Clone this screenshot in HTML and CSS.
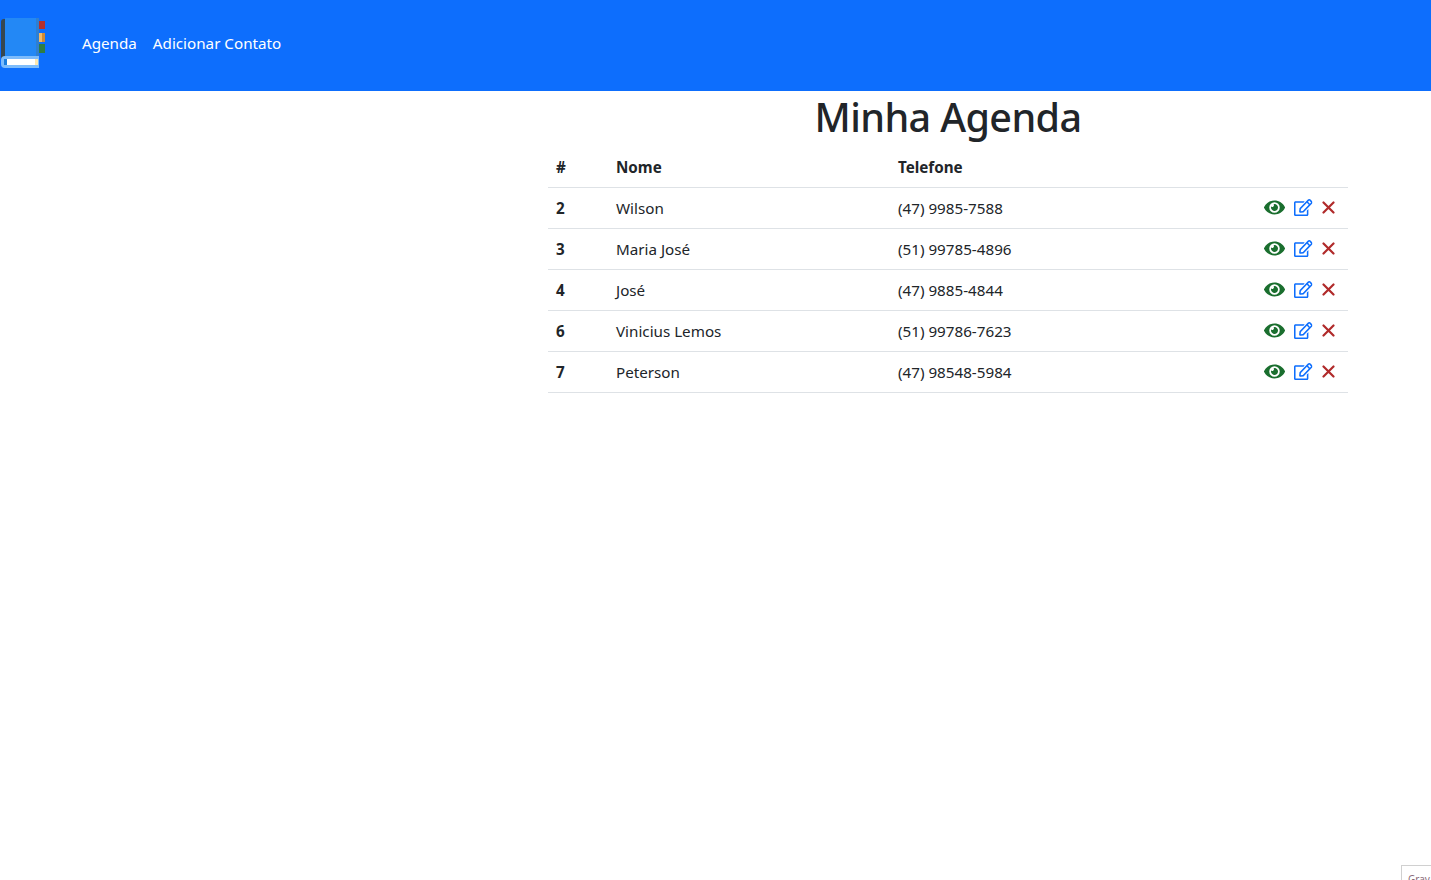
FILE: index.html
```html
<!DOCTYPE html>
<html lang="pt-BR">
<head>
<meta charset="utf-8">
<title>Minha Agenda</title>
<link rel="stylesheet" href="styles.css">
</head>
<body>
<svg class="defs" width="0" height="0" aria-hidden="true">
  <symbol id="eye" viewBox="0 0 576 512"><path fill="currentColor" d="M572.52 241.4C518.29 135.59 410.93 64 288 64S57.68 135.64 3.48 241.41a32.35 32.35 0 0 0 0 29.19C57.71 376.41 165.07 448 288 448s230.32-71.64 284.52-177.41a32.35 32.35 0 0 0 0-29.19zM288 400a144 144 0 1 1 144-144 143.93 143.93 0 0 1-144 144zm0-240a95.31 95.31 0 0 0-25.31 3.79 47.85 47.85 0 0 1-66.9 66.9A95.78 95.78 0 1 0 288 160z"/></symbol>
  <symbol id="edit" viewBox="0 0 576 512" preserveAspectRatio="none"><path fill="currentColor" d="M402.3 344.9l32-32c5-5 13.7-1.5 13.7 5.7V464c0 26.5-21.5 48-48 48H48c-26.5 0-48-21.5-48-48V112c0-26.5 21.5-48 48-48h273.5c7.1 0 10.7 8.6 5.7 13.7l-32 32c-1.5 1.5-3.5 2.3-5.7 2.3H48v352h352V350.5c0-2.1.8-4.1 2.3-5.6zm156.6-201.8L296.3 405.7l-90.4 10c-26.2 2.9-48.5-19.2-45.6-45.6l10-90.4L432.9 17.1c22.9-22.9 59.9-22.9 82.7 0l43.2 43.2c22.9 22.9 22.9 60 .1 82.8zM460.1 174L402 115.9 216.2 301.8l-7.3 65.3 65.3-7.3L460.1 174zm64.8-79.7l-43.2-43.2c-4.1-4.1-10.8-4.1-14.8 0L436 82l58.1 58.1 30.9-30.9c4-4.2 4-10.8-.1-14.9z"/></symbol>
  <symbol id="close" viewBox="0 0 14 14"><path stroke="currentColor" stroke-width="2.2" stroke-linecap="round" fill="none" d="M1.500 2.500l10 10M11.500 2.500l-10 10"/></symbol>
</svg>

<nav class="navbar">
  <svg class="logo" width="46" height="50" viewBox="0 0 46 50" aria-label="Agenda">
    <path d="M6 1H4a3 3 0 0 0-3 3V44H6z" fill="#37474f"/>
    <rect x="39" y="3" width="6" height="8" fill="#b3302e"/>
    <rect x="39" y="15" width="3" height="9" fill="#f2b968"/>
    <rect x="42" y="15" width="3" height="9" fill="#d08a35"/>
    <rect x="39" y="26" width="6" height="9" fill="#2e7d44"/>
    <rect x="5" y="0" width="31" height="38" fill="#2388f5"/>
    <rect x="36" y="0" width="3" height="38" fill="#2f7fd0"/>
    <path d="M5 38H39V50H5a4 4 0 0 1-4-4v-4a4 4 0 0 1 4-4z" fill="#7dbcfb"/>
    <rect x="4" y="41" width="3" height="6" fill="#1c7fe0"/>
    <rect x="7" y="41" width="28" height="6" fill="#ffffff"/>
    <rect x="35" y="41" width="3" height="6" fill="#fde7b0"/>
  </svg>
  <ul class="nav-links">
    <li><a class="nav-link" href="#">Agenda</a></li>
    <li><a class="nav-link" href="#">Adicionar Contato</a></li>
  </ul>
</nav>

<main class="main">
  <section class="content">
    <h1 class="title">Minha Agenda</h1>
    <table class="table">
      <thead>
        <tr><th class="col-id">#</th><th class="col-name">Nome</th><th class="col-phone">Telefone</th><th class="col-actions"></th></tr>
      </thead>
      <tbody>
        <tr><th>2</th><td>Wilson</td><td>(47) 9985-7588</td><td class="actions"><svg class="ic eye"><use href="#eye"/></svg><svg class="ic edit"><use href="#edit"/></svg><svg class="ic close"><use href="#close"/></svg></td></tr>
        <tr><th>3</th><td>Maria José</td><td>(51) 99785-4896</td><td class="actions"><svg class="ic eye"><use href="#eye"/></svg><svg class="ic edit"><use href="#edit"/></svg><svg class="ic close"><use href="#close"/></svg></td></tr>
        <tr><th>4</th><td>José</td><td>(47) 9885-4844</td><td class="actions"><svg class="ic eye"><use href="#eye"/></svg><svg class="ic edit"><use href="#edit"/></svg><svg class="ic close"><use href="#close"/></svg></td></tr>
        <tr><th>6</th><td>Vinicius Lemos</td><td>(51) 99786-7623</td><td class="actions"><svg class="ic eye"><use href="#eye"/></svg><svg class="ic edit"><use href="#edit"/></svg><svg class="ic close"><use href="#close"/></svg></td></tr>
        <tr><th>7</th><td>Peterson</td><td>(47) 98548-5984</td><td class="actions"><svg class="ic eye"><use href="#eye"/></svg><svg class="ic edit"><use href="#edit"/></svg><svg class="ic close"><use href="#close"/></svg></td></tr>
      </tbody>
    </table>
  </section>
</main>

<div class="badge"><span class="badge-text">Gray</span></div>
</body>
</html>
```

FILE: styles.css
```css
* { box-sizing: border-box; }

html, body { height: 100%; }

body {
  margin: 0;
  background: #fff;
  color: #212529;
  font-family: "Noto Sans", "Open Sans", "DejaVu Sans", sans-serif;
  font-size: 15.200px;
  line-height: 24px;
  overflow: hidden;
}

.defs { display: block; height: 0; }

.navbar {
  display: flex;
  align-items: flex-start;
  height: 91px;
  padding-top: 18px;
  background: #0d6efd;
}

.logo { flex: none; display: block; }

.nav-links {
  display: flex;
  gap: 16px;
  list-style: none;
  margin: 13px 0 0 36px;
  padding: 0;
}

.nav-link {
  color: #fff;
  text-decoration: none;
  white-space: nowrap;
}

.main {
  display: flex;
  justify-content: flex-end;
  padding-right: 83px;
}

.content { width: 800px; }

.title {
  margin: 0;
  height: 55px;
  font-size: 39.500px;
  font-weight: 500;
  letter-spacing: -0.600px;
  line-height: 52px;
  text-align: center;
}

.table {
  width: 800px;
  table-layout: fixed;
  border-collapse: collapse;
}

.table th, .table td {
  height: 41px;
  padding: 8px;
  border-bottom: 1px solid #dee2e6;
  text-align: left;
  vertical-align: middle;
}

.table th { font-weight: 700; }

.table thead th { padding: 9px 8px 7px; }

.col-id { width: 60px; }
.col-name { width: 282px; }
.col-phone { width: 300px; }

.table td.actions {
  padding: 0 12px 1px 0;
  text-align: right;
  white-space: nowrap;
  line-height: 0;
}

.ic { display: inline-block; vertical-align: middle; }
.ic.eye { width: 21px; height: 19px; color: #1a6e2e; }
.ic.edit { width: 18.500px; height: 17px; margin-left: 9px; color: #0d6efd; }
.ic.close { width: 14px; height: 14px; margin-left: 9.500px; color: #b02a2a; }

.badge {
  position: fixed;
  left: 1401px;
  top: 865px;
  width: 60px;
  height: 40px;
  padding: 7px 0 0 6px;
  background: #fff;
  border: 1px solid #d0d0d0;
  color: #8a6a78;
  font-size: 10px;
  line-height: 12px;
  overflow: hidden;
}
```
